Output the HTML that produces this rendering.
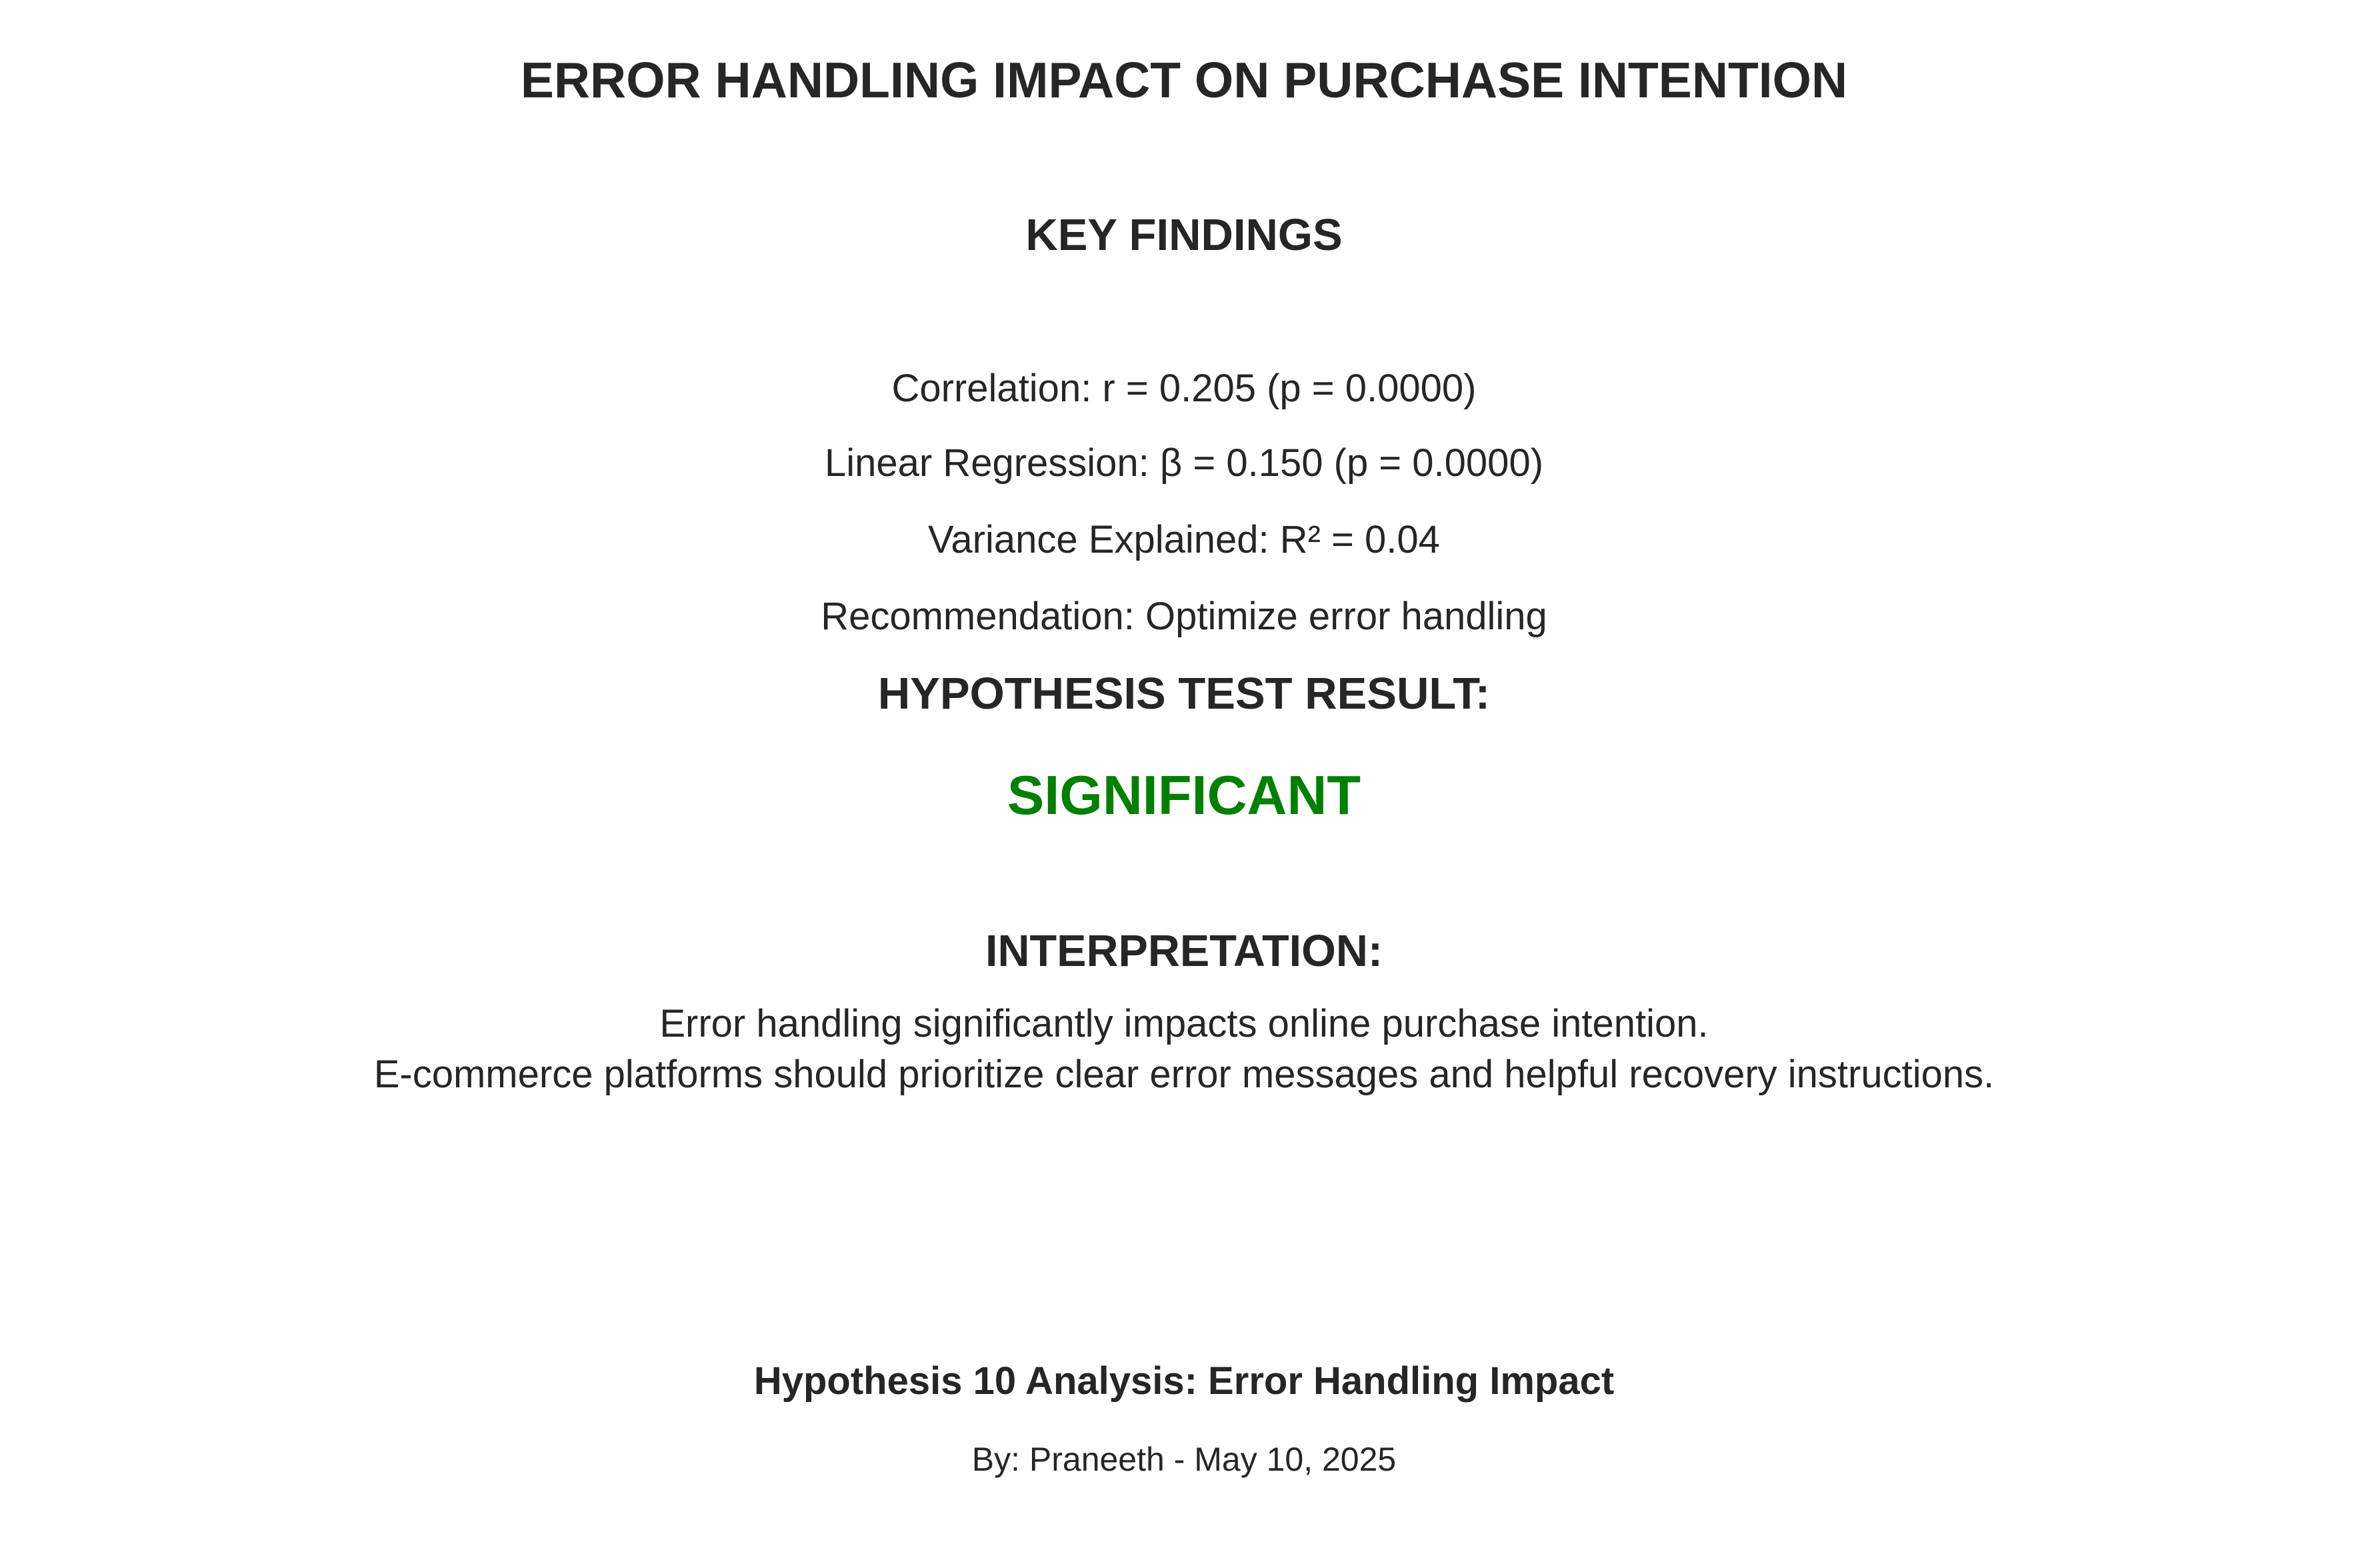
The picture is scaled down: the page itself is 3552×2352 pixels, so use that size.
<!DOCTYPE html>
<html><head><meta charset="utf-8"><style>
html,body{margin:0;padding:0;background:#fff;}
body{width:3552px;height:2352px;position:relative;overflow:hidden;font-family:"Liberation Sans",Arial,sans-serif;color:#262626;}
.t{position:absolute;left:0;width:3552px;text-align:center;line-height:1;white-space:nowrap;}
.b{font-weight:bold;}
</style></head><body>
<div class="t b" style="top:83px;font-size:75px;">ERROR HANDLING IMPACT ON PURCHASE INTENTION</div>
<div class="t b" style="top:319px;font-size:67px;">KEY FINDINGS</div>
<div class="t" style="top:554px;font-size:58px;">Correlation: r = 0.205 (p = 0.0000)</div>
<div class="t" style="top:666px;font-size:58px;">Linear Regression: β = 0.150 (p = 0.0000)</div>
<div class="t" style="top:781px;font-size:58px;">Variance Explained: R² = 0.04</div>
<div class="t" style="top:896px;font-size:58px;">Recommendation: Optimize error handling</div>
<div class="t b" style="top:1007px;font-size:67px;">HYPOTHESIS TEST RESULT:</div>
<div class="t b" style="top:1151px;font-size:83px;color:#008000;">SIGNIFICANT</div>
<div class="t b" style="top:1394px;font-size:66.5px;">INTERPRETATION:</div>
<div class="t" style="top:1507px;font-size:58px;">Error handling significantly impacts online purchase intention.</div>
<div class="t" style="top:1583px;font-size:58px;">E-commerce platforms should prioritize clear error messages and helpful recovery instructions.</div>
<div class="t b" style="top:2043px;font-size:58px;">Hypothesis 10 Analysis: Error Handling Impact</div>
<div class="t" style="top:2164px;font-size:50px;">By: Praneeth - May 10, 2025</div>
</body></html>
